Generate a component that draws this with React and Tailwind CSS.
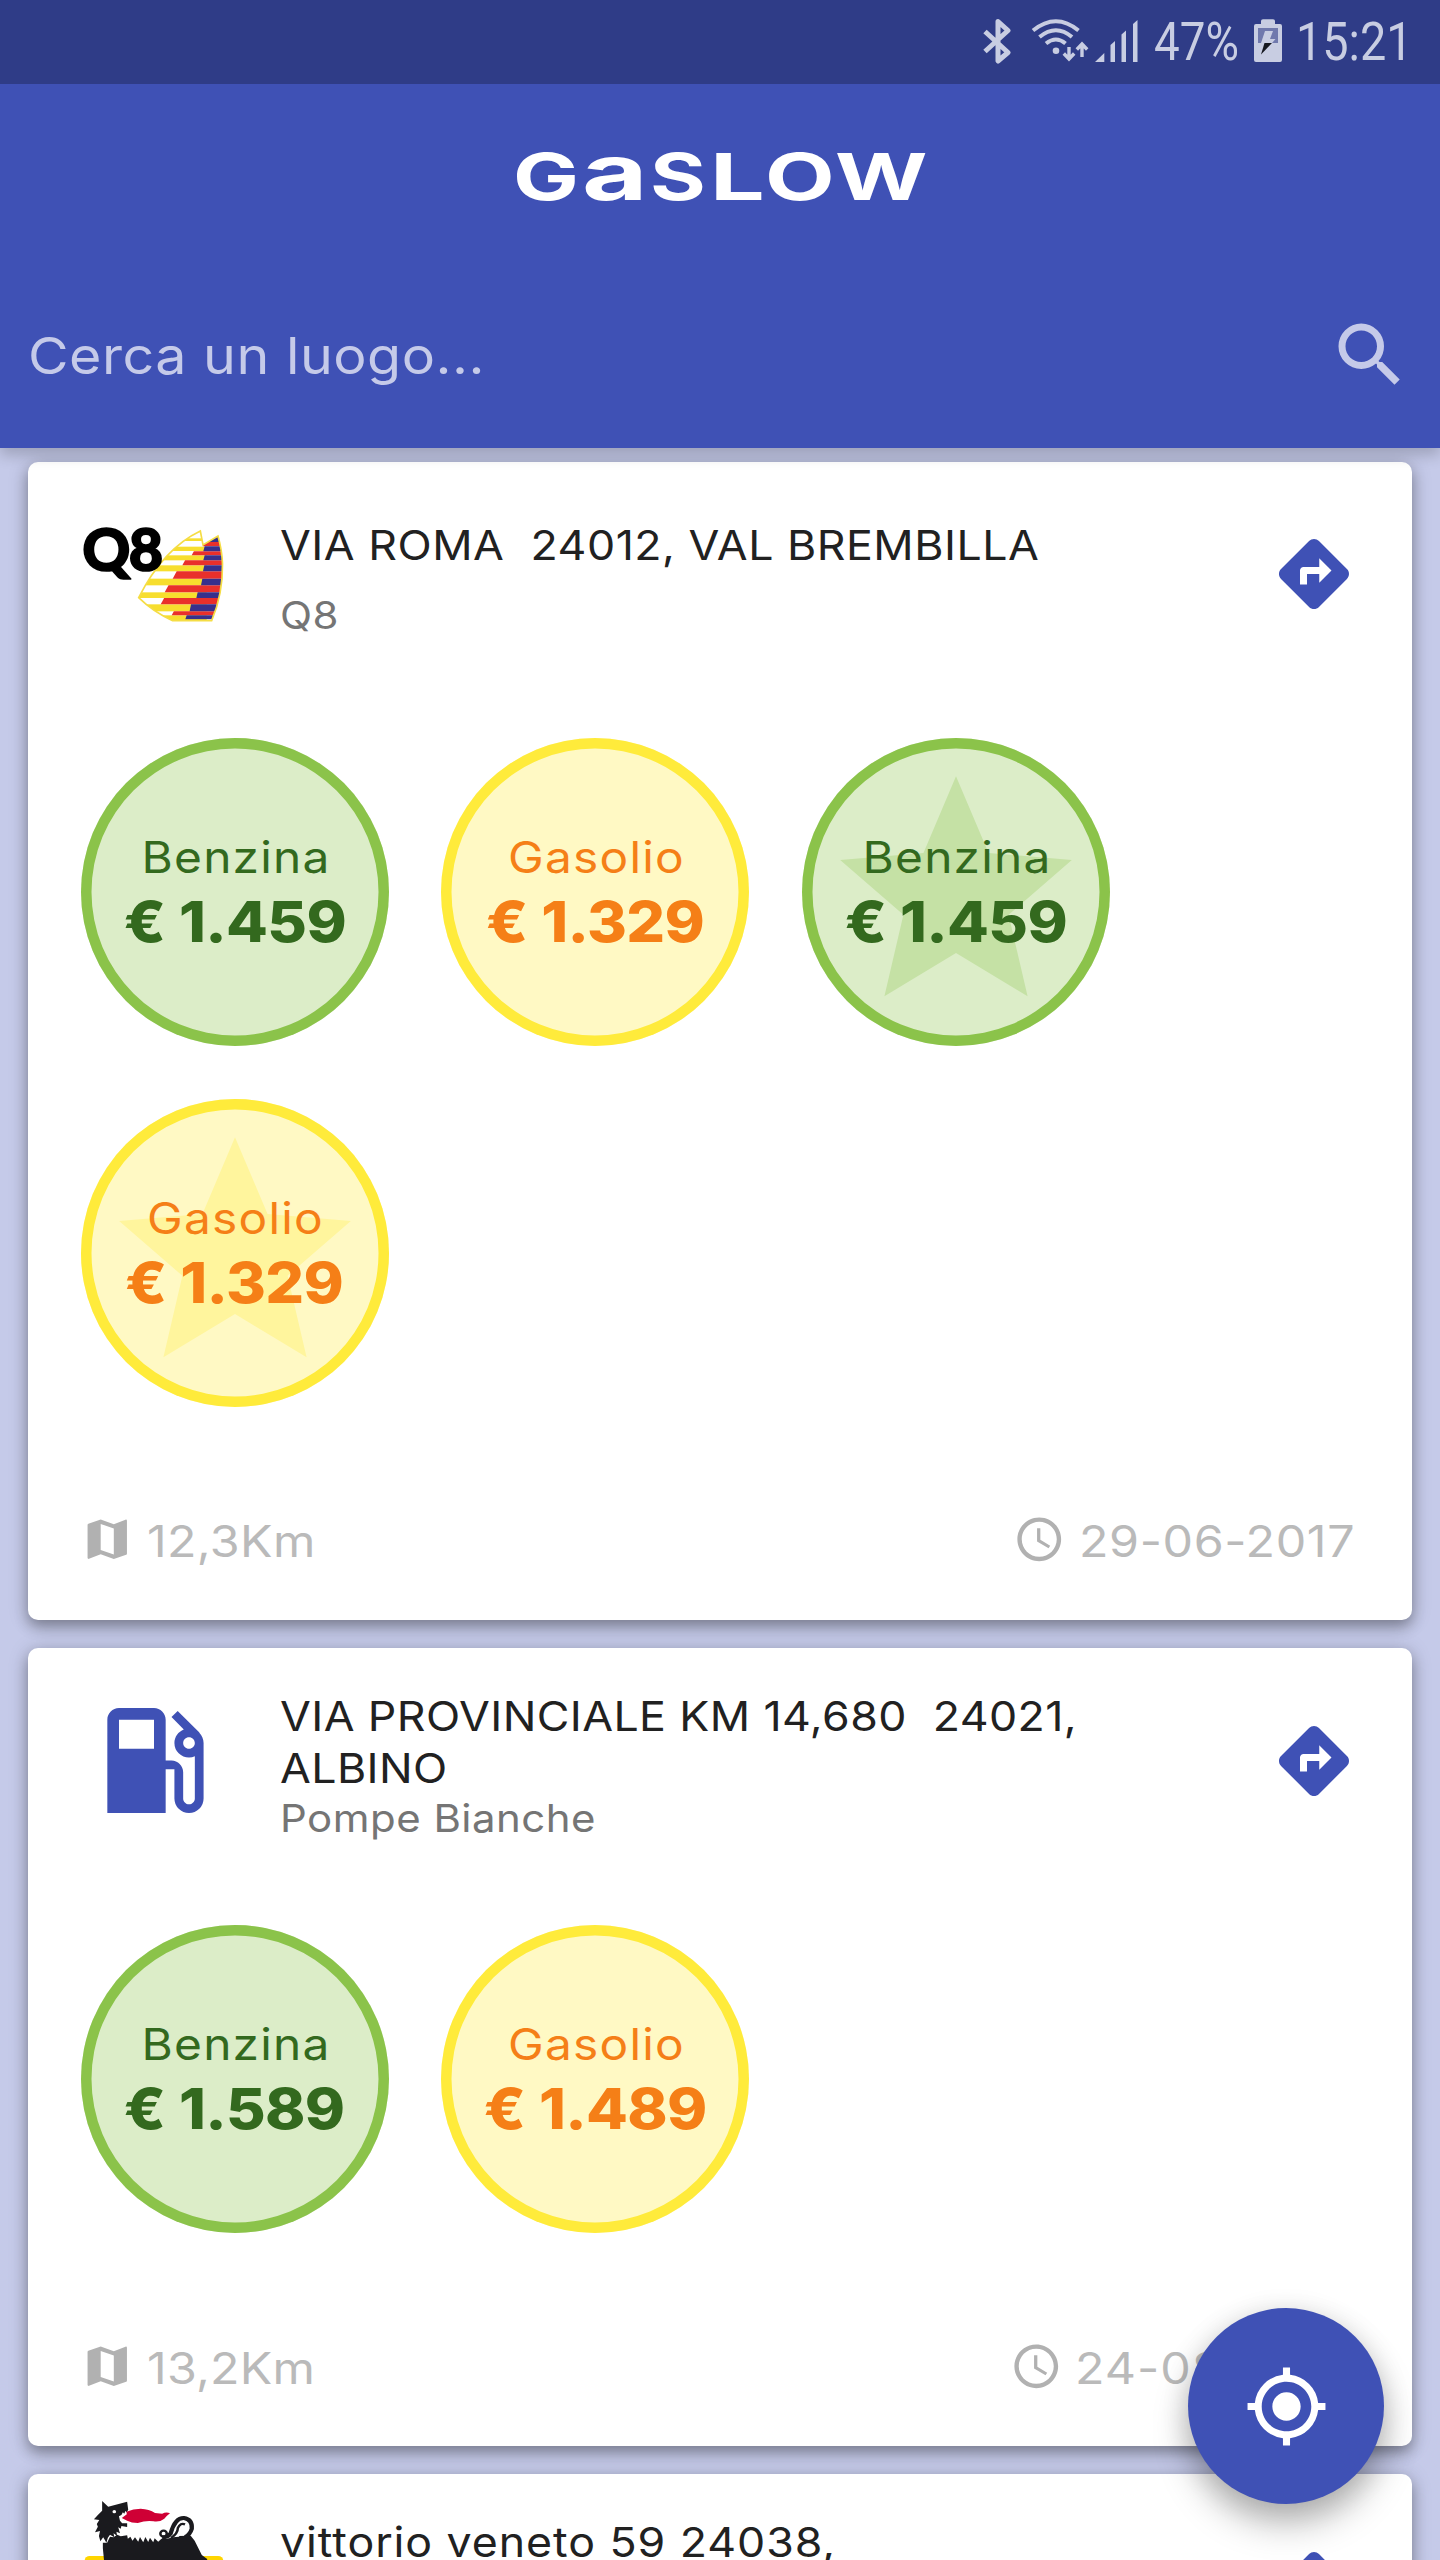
import React from "react";
import {
  MdSearch,
  MdDirections,
  MdMap,
  MdAccessTime,
  MdLocalGasStation,
  MdStar,
  MdGpsFixed,
} from "react-icons/md";

function StatusBar() {
  return (
    <div className="flex h-[84px] items-center bg-[#2f3c87] pl-[983px] text-[#c8cde2]">
      <svg className="h-[84px] w-7 shrink-0" viewBox="983 0 28 84" fill="none" stroke="currentColor">
        <path
          d="M985 31.5 L1008 52.5 L998 61 V21.5 L1008 30.5 L985 51.5"
          strokeWidth="5"
          strokeLinejoin="round"
        />
      </svg>
      <svg className="ml-5 h-[84px] w-[58px] shrink-0" viewBox="1031 0 58 84" fill="none" stroke="currentColor">
        <path d="M1033 30.5 Q1056 12 1078.5 30.5" strokeWidth="4" />
        <path d="M1039.500 37 Q1056 23.500 1072 37" strokeWidth="4" />
        <path d="M1046 43.500 Q1056 35.500 1065.500 43.500" strokeWidth="4" />
        <circle cx="1056" cy="50.700" r="3.300" fill="currentColor" stroke="none" />
        <path d="M1069 47 V58 M1063.800 53.500 L1069 59 L1074.200 53.500" strokeWidth="3.400" />
        <path d="M1082 57 V45 M1076.800 49.500 L1082 44 L1087.200 49.500" strokeWidth="3.400" />
      </svg>
      <svg className="ml-1.5 h-[84px] w-[43px] shrink-0" viewBox="1095 0 43 84" fill="currentColor">
        <path d="M1095 62 L1104.300 53 V62 Z" />
        <path d="M1110.500 45 L1115 41 V62 H1110.500 Z" />
        <path d="M1121.500 34.500 L1126 30.500 V62 H1121.500 Z" />
        <path d="M1133 24 L1137.500 20 V62 H1133 Z" />
      </svg>
      <span className="ml-4 block w-[100px] origin-left scale-x-[0.841] font-['Roboto',sans-serif] text-[54.4px] leading-[86px]">
        47%
      </span>
      <svg className="h-[84px] w-7 shrink-0" viewBox="1254 0 28 84">
        <path
          d="M1256 24 H1261 V21 Q1261 19.300 1263 19.300 H1273 Q1275 19.300 1275 21 V24 H1280 Q1282 24 1282 26 V60 Q1282 62 1280 62 H1256 Q1254 62 1254 60 V26 Q1254 24 1256 24 Z"
          fill="currentColor"
        />
        <path d="M1258 28 H1278 V43 H1258 Z" fill="#7079ad" />
        <path d="M1265 31 H1273 L1270 39 H1275.500 L1272 43 H1261 Z" fill="currentColor" />
        <path d="M1264.500 43 H1272 L1261 54.500 Z" fill="#15171f" />
      </svg>
      <span className="ml-[14px] block w-[136px] origin-left scale-x-[0.86] font-['Roboto',sans-serif] text-[54.4px] leading-[86px]">
        15:21
      </span>
    </div>
  );
}

function Wordmark() {
  return (
    <h1 className="flex h-[110px] items-baseline pl-[513px] text-[64.6px] leading-[110px] font-bold text-white">
      <span className="block w-[68.5px] origin-left scale-x-[1.36]">G</span>
      <span className="block w-[68px] origin-left scale-x-[1.47] text-[77px]">a</span>
      <span className="block w-[60px] origin-left scale-x-[1.32]">S</span>
      <span className="block w-[55.400px] origin-left scale-x-[1.5]">L</span>
      <span className="block w-[70.400px] origin-left scale-x-[1.4]">O</span>
      <span className="block w-[91px] origin-left scale-x-[1.38]">W</span>
    </h1>
  );
}

function Q8Logo() {
  const red = [
    [428, 125, 13],
    [395, 153, 12],
    [367, 180, 15],
    [338, 213, 22],
    [314, 255, 21],
    [302, 293, 19],
    [335, 333, 12],
  ];
  const blue = [
    [428, 106, 19],
    [430, 138, 15],
    [430, 165, 15],
    [429, 195, 18],
    [423, 235, 20],
    [409, 276, 17],
    [389, 312, 21],
    [376, 345, 12],
  ];
  const yellow = [
    [114, 8],
    [139, 13],
    [165, 15],
    [195, 18],
    [235, 20],
    [276, 17],
    [312, 21],
    [345, 17],
  ];
  const sail =
    "M421 92 Q310 145 236 292 Q280 335 338 361 H455 Q489 280 487.500 190 Q486 150 474 107 L429 134 Z";
  return (
    <svg className="h-[94px] w-[140px] overflow-visible" viewBox="72 80 420 282">
      <clipPath id="sail">
        <path d={sail} />
      </clipPath>
      <g clipPath="url(#sail)">
        <path d={sail} fill="#fff" />
        {yellow.map(([y, h]) => (
          <rect key={y} x="230" y={y} width="210" height={h} fill="#f7de2e" />
        ))}
        {red.map(([x, y, h]) => (
          <path key={y} d={`M${x + h * 0.55} ${y} H495 V${y + h} H${x} Z`} fill="#e9302b" />
        ))}
        {blue.map(([x, y, h]) => (
          <path key={y} d={`M${x + 4} ${y} H495 V${y + h} H${x} Z`} fill="#37308c" />
        ))}
      </g>
      <path d={sail} fill="none" stroke="#f5dd45" strokeWidth="5" />
      <text
        x="67 206"
        y="212"
        fill="#000"
        stroke="#000"
        strokeWidth="5"
        strokeLinejoin="round"
        className="font-['Lato',sans-serif] text-[178px] font-black"
      >
        Q8
      </text>
    </svg>
  );
}

function EniLogo() {
  return (
    <svg className="h-[171px] w-[140px]" viewBox="67.2 603 392 513" preserveAspectRatio="none">
      <rect x="69" y="768" width="388" height="340" rx="14" fill="#ffd500" />
      <path
        d="M118 603 L135 620 L188 605 L191 629 L187 637 L183 633 L180 641 L176 637 L172 645 L165 649 L168 662 L174 670 L188 670 V681 L172 678 L170 686 L163 682 L168 700 L158 695 L160 708 L150 700 L152 712 L140 704 L134 713 L130 728 L121 712 L113 724 L109 708 L112 693 L98 697 L106 680 L103 672 L110 660 L95 658 L108 643 L118 632 Z"
        fill="#1a1a1e"
      />
      <circle cx="152" cy="635" r="5" fill="#fff" />
      <path
        d="M173 654 L187 643 L186 635 Q205 626 226 626 Q250 627 266 639 L286 641 Q298 634 308 640 Q297 649 292 656 Q280 667 262 664 Q240 661 218 669 Q200 669 188 662 Z"
        fill="#cf0035"
      />
      <path
        d="M120 728 L132 728 L140 710 L150 712 L160 704 L170 709 L188 706 L190 716 L197 710 L203 722 L210 712 L219 725 L224 711 L233 727 L239 711 L247 726 L252 713 L261 727 L265 715 L275 725 L284 716 L300 716 L330 708 L366 707 L377 722 L397 765 L412 777 L412 800 L125 800 L120 745 Z"
        fill="#1a1a1e"
      />
      <path
        d="M286 712 Q302 712 310 700 Q322 653 347 654 Q371 658 369 686 Q364 704 350 711"
        fill="none"
        stroke="#1a1a1e"
        strokeWidth="12"
      />
      <path d="M316 712 Q320 684 343 676 Q360 682 356 692 Q346 688 333 710 Z" fill="#fff" />
      <path
        d="M311 714 Q330 700 330 684 Q337 667 350 673"
        fill="none"
        stroke="#1a1a1e"
        strokeWidth="7"
      />
      <circle cx="290" cy="701" r="9" fill="none" stroke="#1a1a1e" strokeWidth="7" />
    </svg>
  );
}

const LOGOS = {
  q8: <Q8Logo />,
  pump: <MdLocalGasStation className="size-[141px] text-[#3f51b5]" />,
  eni: <EniLogo />,
};

function Fuel({ name, price, starred }) {
  const petrol = name === "Benzina";
  return (
    <div
      className={`relative flex size-[308px] flex-col items-center rounded-full pt-[92px] ${
        petrol
          ? "bg-[#dcedc8] text-[#33691e] shadow-[inset_0_0_0_10.5px_#8bc34a]"
          : "bg-[#fff9c4] text-[#f57f17] shadow-[inset_0_0_0_10.5px_#ffeb3b]"
      }`}
    >
      {starred && (
        <MdStar
          className={`absolute top-[15px] left-[15px] size-[278px] ${
            petrol ? "text-[#c5e1a5]" : "text-[#fff59d]"
          }`}
        />
      )}
      <span className="relative scale-x-110 pl-[2px] text-[43.5px] leading-[54px] tracking-[1.1px]">
        {name}
      </span>
      <span className="relative scale-x-[1.08] text-[56.4px] leading-[76px] font-extrabold tracking-[-0.6px] whitespace-pre [word-spacing:1px]">
        {price}
      </span>
    </div>
  );
}

function Station({ logo, title, titleTracking, brand, twoLine, fuels, distance, kmTracking, date, dateStyle }) {
  return (
    <article className="rounded-[10px] bg-white shadow-[0_7px_14px_rgba(0,0,0,0.3),0_2px_21px_rgba(0,0,0,0.16)]">
      <header className="flex h-[224px] items-start pr-14 pl-14">
        <div className={`flex w-[140px] shrink-0 items-center justify-center ${twoLine ? "h-[225px]" : "h-[224px]"}`}>
          {LOGOS[logo]}
        </div>
        <div className={`ml-[56px] flex flex-1 flex-col ${twoLine ? "pt-[42px]" : "gap-5 pt-[57px]"}`}>
          <h2
            className={`w-[760px] origin-left scale-x-[1.09] text-[41px] leading-[52px] whitespace-pre text-[#212121] ${titleTracking}`}
          >
            {title}
          </h2>
          <p className="w-[500px] origin-left scale-x-[1.09] text-[38.5px] leading-[48px] tracking-[0.45px] text-[#757575]">
            {brand}
          </p>
        </div>
        <MdDirections
          className={`size-[84px] shrink-0 text-[#3f51b5] ${twoLine ? "mt-[70.5px]" : "mt-[70px]"}`}
        />
      </header>
      <div className={`flex flex-wrap gap-[52.5px] pl-[52.500px] ${twoLine ? "pt-[53px]" : "pt-[52px]"}`}>
        {fuels.map((f, i) => (
          <Fuel key={i} {...f} />
        ))}
      </div>
      <footer
        className={`flex items-center justify-between pt-[106.5px] pr-[55.5px] pl-[52.5px] text-[44px] leading-[52px] text-[#bababa] ${
          twoLine ? "pb-[54px]" : "pb-[54.5px]"
        }`}
      >
        <div className="flex items-center gap-[14px]">
          <MdMap className="size-[52.500px] text-[#b1b1b1]" />
          <span className={`relative top-[2px] origin-left scale-x-110 ${kmTracking}`}>{distance}</span>
        </div>
        <div className="flex items-center gap-[13px]">
          <MdAccessTime className="size-[52.500px] text-[#b1b1b1]" />
          <span className={`relative top-[2px] origin-left scale-x-110 ${dateStyle}`}>{date}</span>
        </div>
      </footer>
    </article>
  );
}

const STATIONS = [
  {
    logo: "q8",
    title: "VIA ROMA\u00a0 24012, VAL BREMBILLA",
    titleTracking: "tracking-[0.46px]",
    brand: "Q8",
    distance: "12,3Km",
    kmTracking: "tracking-[0.3px]",
    date: "29-06-2017",
    dateStyle: "w-[278px] tracking-[0.55px]",
    fuels: [
      { name: "Benzina", price: "€ 1.459" },
      { name: "Gasolio", price: "€ 1.329" },
      { name: "Benzina", price: "€ 1.459", starred: true },
      { name: "Gasolio", price: "€ 1.329", starred: true },
    ],
  },
  {
    logo: "pump",
    title: "VIA PROVINCIALE KM 14,680\u00a0 24021,\nALBINO",
    titleTracking: "tracking-[0.37px]",
    brand: "Pompe Bianche",
    twoLine: true,
    distance: "13,2Km",
    kmTracking: "tracking-[0.2px]",
    date: "24-08-2017",
    dateStyle: "w-[281.5px] tracking-[0.9px]",
    fuels: [
      { name: "Benzina", price: "€ 1.589" },
      { name: "Gasolio", price: "€ 1.489" },
    ],
  },
  {
    logo: "eni",
    title: "vittorio veneto 59 24038,",
    titleTracking: "tracking-[0.86px]",
    twoLine: true,
    distance: "",
    date: "",
    fuels: [],
  },
];

export default function App() {
  return (
    <div className="relative flex h-[2560px] w-[1440px] flex-col overflow-hidden bg-[#c5cae9] font-['Inter',sans-serif]">
      <div className="relative z-10 h-[448px] shrink-0 bg-[#3f51b5] shadow-[0_7px_14px_rgba(0,0,0,0.2)]">
        <StatusBar />
        <div className="pt-[33px]">
          <Wordmark />
        </div>
        <div className="mt-[85.5px] flex h-[84px] items-center justify-between pr-7 pl-7 text-[#c5cae9]">
          <span className="relative top-px origin-left scale-x-[1.09] text-[51px] leading-[84px] tracking-[0.45px]">
            Cerca un luogo...
          </span>
          <MdSearch className="size-[84px]" />
        </div>
      </div>
      <main className="flex flex-col gap-7 px-7 pt-[14px]">
        {STATIONS.map((s) => (
          <Station key={s.logo} {...s} />
        ))}
      </main>
      <button className="absolute right-14 bottom-14 z-20 flex size-[196px] items-center justify-center rounded-full bg-[#3f51b5] text-white shadow-[0_21px_35px_rgba(0,0,0,0.25),0_5px_28px_rgba(0,0,0,0.14)]">
        <MdGpsFixed className="size-[85px]" />
      </button>
    </div>
  );
}
